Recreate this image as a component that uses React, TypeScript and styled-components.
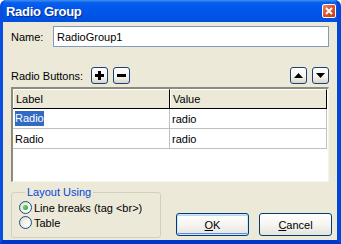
import React from 'react';
import styled, { createGlobalStyle } from 'styled-components';

const GlobalStyle = createGlobalStyle`
  html, body {
    margin: 0;
    padding: 0;
    background: #ffffff;
  }
  body {
    font-family: "Liberation Sans", Arial, sans-serif;
    font-size: 11px;
    color: #000000;
  }
`;

const Window = styled.div`
  width: 341px;
  height: 244px;
  box-sizing: border-box;
  display: flex;
  flex-direction: column;
  background: #0055e5;
  border-left: 3px solid #0a4ee0;
  border-right: 4px solid #0047d8;
  border-bottom: 4px solid #0035c8;
  border-radius: 6px 6px 0 0;
  overflow: hidden;
`;

const TitleBar = styled.div`
  height: 22px;
  margin-left: -3px;
  margin-right: -4px;
  padding: 0 5px 0 6px;
  display: flex;
  align-items: center;
  justify-content: space-between;
  background: linear-gradient(#3b8ffb 0%, #0a5fe8 12%, #0058ee 30%, #0054e5 70%, #0050de 100%);
`;

const Title = styled.span`
  font-weight: bold;
  font-size: 13px;
  letter-spacing: -0.3px;
  color: #ffffff;
  text-shadow: 1px 1px 0 #0a2a8a;
`;

const CloseButton = styled.div`
  width: 14px;
  height: 14px;
  box-sizing: border-box;
  border: 1px solid #ffffff;
  border-radius: 2px;
  background: linear-gradient(135deg, #f08a6a 0%, #e0532e 45%, #c43f1c 100%);
  display: flex;
  align-items: center;
  justify-content: center;
`;

const Body = styled.div`
  flex: 1;
  background: #ece9d8;
  padding: 4px 8px 0 8px;
  display: flex;
  flex-direction: column;
`;

const NameRow = styled.div`
  display: flex;
  align-items: center;
`;

const Label = styled.span`
  width: 42px;
`;

const TextInput = styled.input`
  flex: 1;
  height: 21px;
  box-sizing: border-box;
  border: 1px solid #7f9db9;
  padding: 0 3px;
  font-family: "Liberation Sans", Arial, sans-serif;
  font-size: 11px;
  outline: none;
  background: #ffffff;
`;

const ToolRow = styled.div`
  display: flex;
  align-items: center;
  margin-top: 20px;
  gap: 5px;
`;

const ToolLabel = styled.span`
  width: 75px;
`;

const Spacer = styled.div`
  flex: 1;
`;

const SmallButton = styled.div`
  width: 17px;
  height: 17px;
  box-sizing: border-box;
  border: 1px solid #1c3f74;
  border-radius: 3px;
  background: linear-gradient(#ffffff 0%, #f4f3ee 60%, #d8d5c8 100%);
  display: flex;
  align-items: center;
  justify-content: center;
`;

const Grid = styled.div`
  margin-top: 3px;
  height: 95px;
  box-sizing: border-box;
  border-top: 2px solid #8d8a7e;
  border-left: 2px solid #8d8a7e;
  border-right: 1px solid #f4f3ee;
  border-bottom: 1px solid #f4f3ee;
  background: #ffffff;
  padding-right: 1px;
`;

const GridRow = styled.div<{ header?: boolean }>`
  display: grid;
  grid-template-columns: 157px 157px;
  height: 19px;
  border-bottom: 1px solid ${p => (p.header ? '#000000' : '#c0c0c0')};
  background: ${p => (p.header ? '#ece9d8' : '#ffffff')};
`;

const Cell = styled.div<{ header?: boolean }>`
  display: flex;
  align-items: center;
  padding-left: 2px;
  box-sizing: border-box;
  border-right: 1px solid ${p => (p.header ? '#000000' : '#c0c0c0')};
  ${p => p.header && 'border-top: 1px solid #ffffff; border-left: 1px solid #ffffff;'}
`;

const Selected = styled.span`
  background: #316ac5;
  color: #ffffff;
  padding: 1px 0 2px 0;
`;

const Bottom = styled.div`
  display: flex;
  align-items: flex-end;
  margin-top: 4px;
`;

const GroupBox = styled.fieldset`
  margin: 0;
  width: 150px;
  height: 52px;
  box-sizing: border-box;
  border: 1px solid #d0d0bf;
  border-radius: 3px;
  padding: 3px 0 0 7px;
  display: flex;
  flex-direction: column;
  gap: 2px;
`;

const Legend = styled.legend`
  color: #0046d5;
  padding: 0 2px;
  margin-left: 6px;
`;

const RadioRow = styled.label`
  display: flex;
  align-items: center;
  gap: 2px;
  height: 13px;
`;

const RadioCircle = styled.span<{ checked?: boolean }>`
  width: 13px;
  height: 13px;
  box-sizing: border-box;
  border: 1px solid #1c5180;
  border-radius: 50%;
  background: radial-gradient(circle at 65% 65%, #ffffff 0%, #f3f2ec 40%, #d6d3c6 100%);
  display: flex;
  align-items: center;
  justify-content: center;

  &::after {
    content: '';
    width: 5px;
    height: 5px;
    border-radius: 50%;
    background: ${p => (p.checked ? 'radial-gradient(circle at 35% 35%, #6bd56b, #21a121)' : 'transparent')};
  }
`;

const Actions = styled.div`
  flex: 1;
  display: flex;
  justify-content: flex-end;
  gap: 10px;
  margin-right: -3px;
  margin-bottom: 2px;
`;

const DialogButton = styled.div<{ primary?: boolean }>`
  width: 73px;
  height: 23px;
  box-sizing: border-box;
  border: 1px solid #003c74;
  border-radius: 3px;
  background: linear-gradient(#ffffff 0%, #f6f5f1 50%, #e6e4da 100%);
  display: flex;
  align-items: center;
  justify-content: center;
  ${p => p.primary && 'box-shadow: inset 0 0 0 1px #cee7ff, inset 0 -1px 0 1px #6982ee, inset 0 1px 0 1px #bcd4f6;'}

  u {
    text-decoration: underline;
  }
`;

const Plus = () => (
  <svg width="9" height="9" viewBox="0 0 9 9">
    <rect x="3" y="0" width="3" height="9" fill="#000" />
    <rect x="0" y="3" width="9" height="3" fill="#000" />
  </svg>
);

const Minus = () => (
  <svg width="9" height="9" viewBox="0 0 9 9">
    <rect x="0" y="3" width="9" height="3" fill="#000" />
  </svg>
);

const Arrow = ({ up }: { up?: boolean }) => (
  <svg width="9" height="5" viewBox="0 0 9 5">
    <polygon points={up ? '4.5,0 9,5 0,5' : '0,0 9,0 4.5,5'} fill="#000" />
  </svg>
);

const rows = [
  { label: 'Radio', value: 'radio' },
  { label: 'Radio', value: 'radio' },
];

const App: React.FC = () => {
  return (
    <>
      <GlobalStyle />
      <Window>
        <TitleBar>
          <Title>Radio Group</Title>
          <CloseButton>
            <svg width="8" height="8" viewBox="0 0 8 8">
              <path d="M1 1 L7 7 M7 1 L1 7" stroke="#fff" strokeWidth="2" />
            </svg>
          </CloseButton>
        </TitleBar>
        <Body>
          <NameRow>
            <Label>Name:</Label>
            <TextInput defaultValue="RadioGroup1" />
          </NameRow>
          <ToolRow>
            <ToolLabel>Radio Buttons:</ToolLabel>
            <SmallButton><Plus /></SmallButton>
            <SmallButton><Minus /></SmallButton>
            <Spacer />
            <SmallButton><Arrow up /></SmallButton>
            <SmallButton><Arrow /></SmallButton>
          </ToolRow>
          <Grid>
            <GridRow header>
              <Cell header>Label</Cell>
              <Cell header>Value</Cell>
            </GridRow>
            {rows.map((r, i) => (
              <GridRow key={i}>
                <Cell>{i === 0 ? <Selected>{r.label}</Selected> : r.label}</Cell>
                <Cell>{r.value}</Cell>
              </GridRow>
            ))}
          </Grid>
          <Bottom>
            <GroupBox>
              <Legend>Layout Using</Legend>
              <RadioRow>
                <RadioCircle checked />
                Line breaks (tag &lt;br&gt;)
              </RadioRow>
              <RadioRow>
                <RadioCircle />
                Table
              </RadioRow>
            </GroupBox>
            <Actions>
              <DialogButton primary><span><u>O</u>K</span></DialogButton>
              <DialogButton><span><u>C</u>ancel</span></DialogButton>
            </Actions>
          </Bottom>
        </Body>
      </Window>
    </>
  );
};

export default App;
